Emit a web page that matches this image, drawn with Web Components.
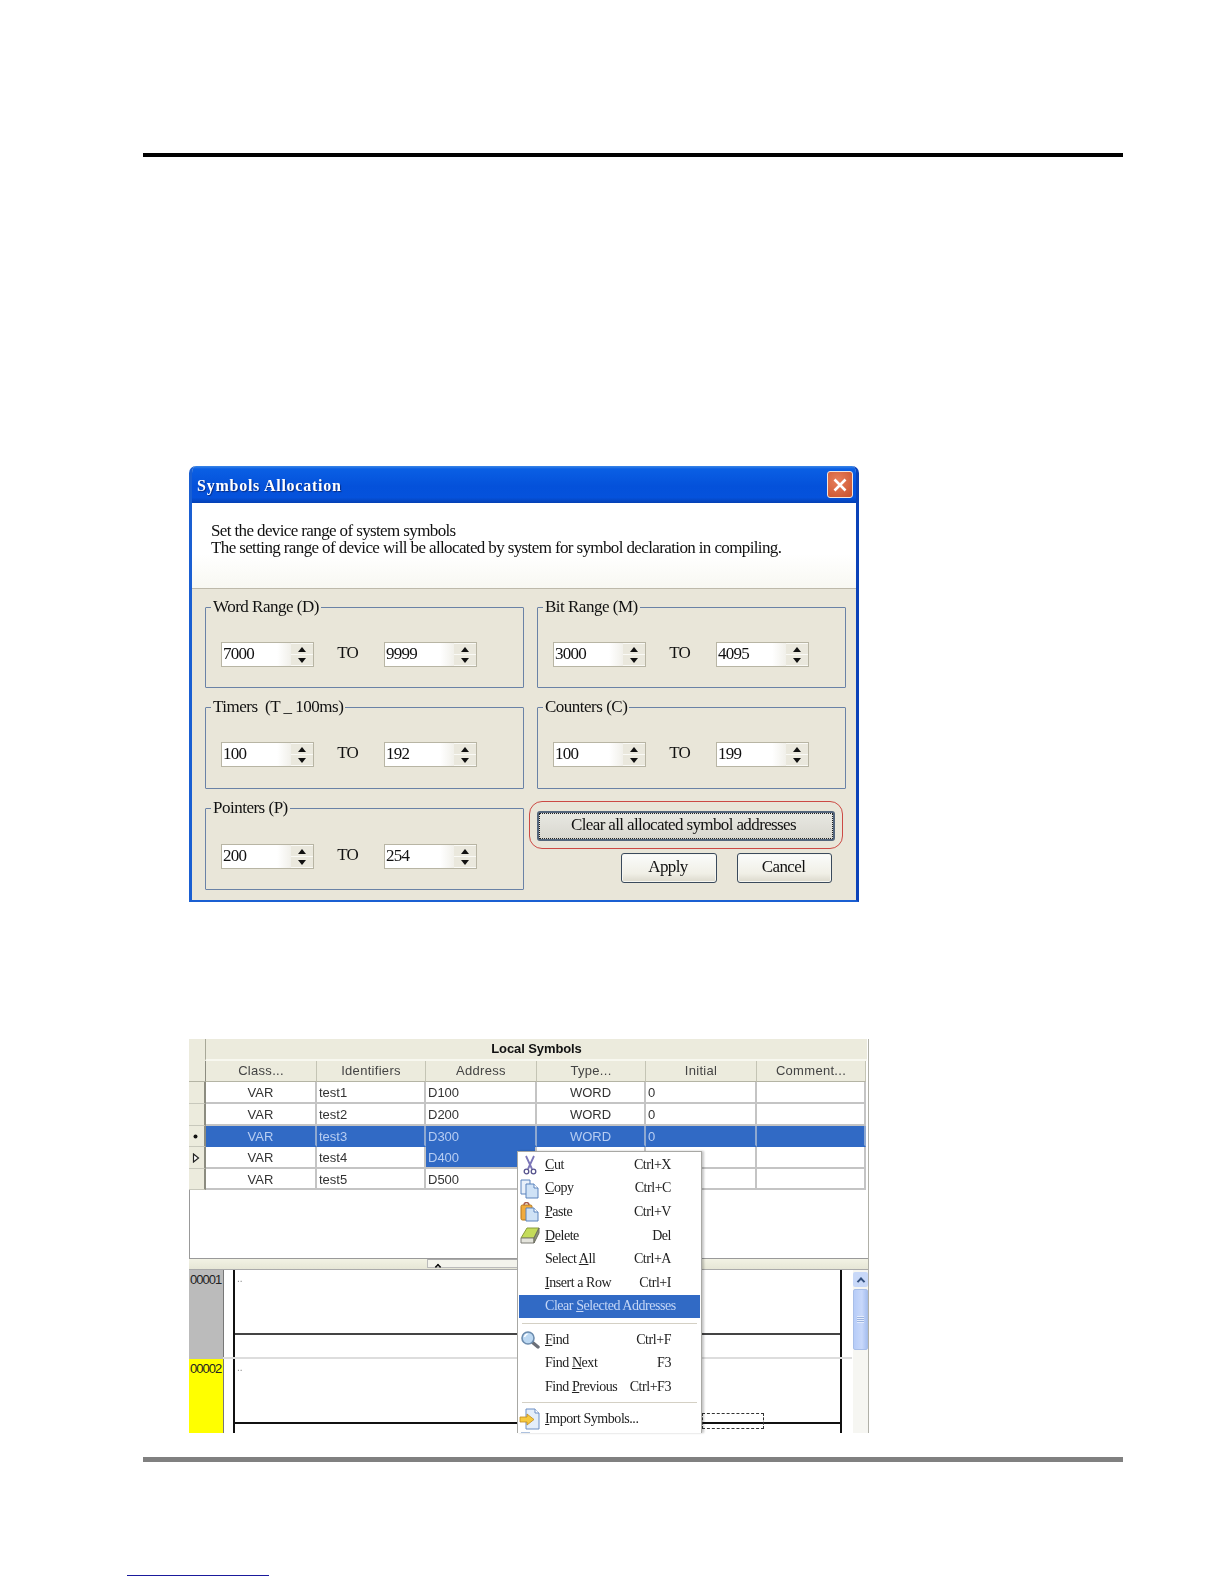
<!DOCTYPE html>
<html>
<head>
<meta charset="utf-8">
<title>Symbols Allocation</title>
<style>
  html, body { margin: 0; background: #fff; }
  body { padding: 153px 0 0 143px; width: 1224px; height: 1584px; box-sizing: border-box; overflow: hidden; font-family: "Liberation Serif", serif; }
</style>
</head>
<body>
<page-rule thick="4" color="#000"></page-rule>

<xp-dialog heading="Symbols Allocation">
  <xp-group label="Word Range (D)" from="7000" to="9999"></xp-group>
  <xp-group label="Bit Range (M)" from="3000" to="4095"></xp-group>
  <xp-group label="Timers&nbsp; (T _ 100ms)" from="100" to="192"></xp-group>
  <xp-group label="Counters (C)" from="100" to="199"></xp-group>
  <xp-group label="Pointers (P)" from="200" to="254" low></xp-group>
  <dialog-actions></dialog-actions>
</xp-dialog>

<symbol-panel></symbol-panel>

<page-rule thick="5" color="#808080" class="bottom"></page-rule>
<foot-link></foot-link>

<script>
const ICONS = {
    cut: `<svg width="20" height="20" viewBox="0 0 20 20" fill="none"><path d="M6 1l6 13M14 1L8 14" stroke="#7b76b8" stroke-width="1.8"/><circle cx="6.5" cy="16.5" r="2.3" stroke="#55528c" stroke-width="1.3"/><circle cx="13.5" cy="16.5" r="2.3" stroke="#55528c" stroke-width="1.3"/></svg>`,
    copy: `<svg width="20" height="20" viewBox="0 0 20 20"><path d="M1 1h9v14H1z" fill="#e8f0fa" stroke="#5b83bd"/><path d="M6 5h8l4 4v10H6z" fill="#cfe2f6" stroke="#5b83bd"/><path d="M14 5v4h4" fill="#fff" stroke="#5b83bd"/></svg>`,
    paste: `<svg width="20" height="20" viewBox="0 0 20 20"><rect x="1" y="3" width="11" height="15" rx="1.5" fill="#f0ab3e" stroke="#b57718"/><path d="M4 3a2.5 2.5 0 0 1 5 0" fill="none" stroke="#a85c4c" stroke-width="1.4"/><path d="M6 6h8l4 4v9H6z" fill="#cfe2f6" stroke="#5b83bd"/><path d="M14 6v4h4" fill="#fff" stroke="#5b83bd"/></svg>`,
    erase: `<svg width="20" height="20" viewBox="0 0 20 20"><path d="M7 2h12l-5 10H1z" fill="#c4dc5a" stroke="#8a9c3c"/><path d="M1 12h13v5H1z" fill="#e4e4dc" stroke="#7c7c74"/><path d="M14 12l5-10v5l-5 10z" fill="#8f9a78" stroke="#6d6d60"/></svg>`,
    find: `<svg width="20" height="20" viewBox="0 0 20 20" fill="none"><path d="M12 12l6 5" stroke="#6b6f78" stroke-width="3.4" stroke-linecap="round"/><circle cx="8" cy="8" r="6" fill="#bcd8f2" stroke="#6c8cae" stroke-width="1.6"/><path d="M4.5 7a4 4 0 0 1 3-3" stroke="#fff" stroke-width="1.5"/></svg>`,
    load: `<svg width="22" height="22" viewBox="0 0 22 22"><path d="M7 1h9l4 4v16H7z" fill="#e4eefa" stroke="#6d8fc4"/><path d="M16 1v4h4" fill="#fff" stroke="#6d8fc4"/><path d="M1 9h7V6l7 5.5L8 17v-3H1z" fill="#f6c93e" stroke="#c08a1c" stroke-width=".8"/></svg>`
};

class PageRule extends HTMLElement {
    connectedCallback() {
        const thick = this.getAttribute('thick');
        const color = this.getAttribute('color');
        const top = this.classList.contains('bottom') ? 24 : 0;
        this.attachShadow({ mode: 'open' }).innerHTML = `
            <style>
                :host { display: block; width: 980px; height: ${thick}px; margin-top: ${top}px; background: ${color}; }
            </style>`;
    }
}

class FootLink extends HTMLElement {
    constructor() {
        super();
        this.attachShadow({ mode: 'open' }).innerHTML = `
            <style>
                :host { display: block; width: 142px; height: 1px; margin: 113px 0 0 -16px; background: #1a1a9c; }
            </style>`;
    }
}

class XpDialog extends HTMLElement {
    constructor() {
        super();
        this.attachShadow({ mode: 'open' }).innerHTML = `
            <style>
                :host {
                    display: block; width: 670px; height: 436px; margin: 309px 0 0 46px;
                    box-sizing: border-box; border-radius: 7px 7px 0 0; overflow: hidden;
                    background: #e9e6d9; font-family: "Liberation Serif", serif; color: #111;
                    border: solid #1a5fd2; border-width: 0 3px 2px 3px; border-right-color: #0b42b8;
                    filter: blur(.45px);
                }
                .title {
                    height: 37px; margin: 0 -3px; padding: 3px 6px 0 8px; box-sizing: border-box; display: flex; align-items: center; justify-content: space-between;
                    background: linear-gradient(#3b86e6 0, #0a5fe4 8%, #0451da 55%, #0552dc 85%, #0440b4 100%);
                    color: #fff; font-weight: bold; font-size: 16px; letter-spacing: .75px; text-shadow: 1px 1px 1px #0a2c80;
                }
                .close {
                    width: 26px; height: 27px; margin-top: -3px; box-sizing: border-box; border: 1px solid #f4e4dc; border-radius: 3px;
                    background: radial-gradient(circle at 40% 35%, #e8805c, #c8502c); display: flex; align-items: center; justify-content: center;
                }
                .intro {
                    height: 86px; padding: 19px 0 0 19px; box-sizing: border-box;
                    background: linear-gradient(#fff 60%, #f8f8f2); border-bottom: 1px solid #bdb9aa;
                    font-size: 17px; line-height: 17px; letter-spacing: -.62px;
                }
                .body {
                    display: grid; grid-template-columns: 319px 309px; grid-template-rows: 81px 82px 82px;
                    gap: 19px 13px; padding: 18px 0 0 13px;
                }
            </style>
            <div class="title">
                <span>${this.getAttribute('heading')}</span>
                <span class="close"><svg width="16" height="16" viewBox="0 0 16 16"><path d="M2.5 2.5l11 11M13.5 2.5l-11 11" stroke="#fff" stroke-width="2.6"/></svg></span>
            </div>
            <div class="intro">Set the device range of system symbols<br>The setting range of device will be allocated by system for symbol declaration in compiling.</div>
            <div class="body"><slot></slot></div>`;
    }
}

class XpGroup extends HTMLElement {
    connectedCallback() {
        const root = this.attachShadow({ mode: 'open' });
        root.innerHTML = `
            <style>
                :host {
                    display: block; position: relative; box-sizing: border-box;
                    border: 1px solid #6a82a6; border-radius: 1px;
                    font-size: 17px; letter-spacing: -.5px; color: #111;
                }
                .label { position: absolute; left: 5px; top: -11px; padding: 0 2px; background: #e9e6d9; line-height: 20px; white-space: nowrap; }
                .row { display: grid; grid-template-columns: 93px 70px 93px; align-items: center; padding: ${this.hasAttribute('low') ? 35 : 34}px 0 0 15px; }
                .to { text-align: center; padding: 0 3px 4px 0; letter-spacing: -1px; }
            </style>
            <div class="label">${this.getAttribute('label')}</div>
            <div class="row">
                <xp-spin value="${this.getAttribute('from')}"></xp-spin>
                <span class="to">TO</span>
                <xp-spin value="${this.getAttribute('to')}"></xp-spin>
            </div>`;
    }
}

class XpSpin extends HTMLElement {
    connectedCallback() {
        this.attachShadow({ mode: 'open' }).innerHTML = `
            <style>
                :host {
                    display: flex; height: 25px; box-sizing: border-box; border: 1px solid #b8b5a4;
                    background: #fff; font-size: 17px; letter-spacing: -.75px; color: #111; line-height: 21px;
                }
                .val { flex: 1; padding-left: 1px; background: linear-gradient(90deg, #fff 80%, #f1f0ea); }
                .btns { width: 22px; display: flex; flex-direction: column; background: #fafaf6; gap: 1px; padding: 1px 0; box-sizing: border-box; }
                .btns span { flex: 1; display: flex; align-items: center; justify-content: center; background: #eae8dd; }
                i { width: 0; height: 0; border: 4px solid transparent; }
                .up { border-bottom: 5px solid #111; border-top: 0; }
                .dn { border-top: 5px solid #111; border-bottom: 0; }
            </style>
            <span class="val">${this.getAttribute('value')}</span>
            <span class="btns"><span><i class="up"></i></span><span><i class="dn"></i></span></span>`;
    }
}

class XpButton extends HTMLElement {
    constructor() {
        super();
        this.attachShadow({ mode: 'open' }).innerHTML = `
            <style>
                :host {
                    display: flex; align-items: center; justify-content: center; box-sizing: border-box; height: 30px;
                    border: 1px solid #3a4a5c; border-radius: 3px;
                    background: linear-gradient(#fbfcfb, #f0efe6 70%, #dcd9cc);
                    box-shadow: inset 0 0 0 1px #f6f6f0;
                    font-size: 17px; letter-spacing: -.62px; color: #111; padding: 0 2px 2px 0;
                }
                :host([focused]) {
                    background: linear-gradient(#e8e8e2, #d8d7cf); border: 2px solid #54667c;
                    box-shadow: none; outline: 1px dotted #222; outline-offset: -3px; padding-right: 5px;
                }
            </style>
            <slot></slot>`;
    }
}

class DialogActions extends HTMLElement {
    constructor() {
        super();
        this.attachShadow({ mode: 'open' }).innerHTML = `
            <style>
                :host { display: block; padding-top: 3px; }
                .clear { position: relative; width: 298px; }
                .ring { position: absolute; left: -8px; right: -8px; top: -10px; bottom: -8px; border: 1.5px solid #cc4a44; border-radius: 13px; }
                .row { display: flex; gap: 20px; justify-content: flex-end; margin-top: 12px; padding-right: 14px; }
                .row xp-button { width: 95px; }
                .row xp-button:first-child { width: 96px; }
            </style>
            <div class="clear">
                <div class="ring"></div>
                <xp-button focused>Clear all allocated symbol addresses</xp-button>
            </div>
            <div class="row">
                <xp-button>Apply</xp-button>
                <xp-button>Cancel</xp-button>
            </div>`;
    }
}

class SymbolPanel extends HTMLElement {
    constructor() {
        super();
        const rows = [
            ['test1', 'D100', 22, '', 'WORD', '0'],
            ['test2', 'D200', 22, '', 'WORD', '0'],
            ['test3', 'D300', 21, 'sel', 'WORD', '0'],
            ['test4', 'D400', 22, 'addr', '', ''],
            ['test5', 'D500', 21, '', '', '']
        ];
        const cols = '17px 111px 109px 111px 109px 111px 109px';
        this.attachShadow({ mode: 'open' }).innerHTML = `
            <style>
                :host {
                    display: block; position: relative; width: 680px; height: 394px; margin: 137px 0 0 46px; box-sizing: border-box;
                    border-right: 1px solid #b0b0a8;
                    font-family: "Liberation Sans", sans-serif; font-size: 13px; color: #333;
                }
                .view { filter: blur(.35px); height: 100%; display: flex; flex-direction: column; }
                .band { height: 22px; flex: none; display: grid; grid-template-columns: 16px 1fr; background: #ecebdd; margin-right: 1px; }
                .band b { display: block; text-align: center; color: #111; line-height: 20px; letter-spacing: -.1px; border-left: 1px solid #a8a898; border-bottom: 2px solid #f8f8f0; box-sizing: border-box; height: 22px; }
                .grid { display: grid; grid-template-columns: ${cols}; flex: none; }
                .row { grid-template-rows: 100%; }
                .head span { height: 21px; line-height: 20px; text-align: center; background: #ecebdd; color: #444; letter-spacing: .3px; border-right: 1px solid #c4c4b4; border-bottom: 1px solid #b4b4a4; box-sizing: border-box; }
                .gutter { background: #ecebdd; border-right: 2px solid #8c8c80; border-bottom: 1px solid #c8c8bc; box-sizing: border-box; display: flex; align-items: center; justify-content: center; padding-right: 2px; }
                .row > span:not(.gutter) { line-height: 20px; padding-top: 1px; background: #fff; border-right: 2px solid #c4c4c4; border-bottom: 2px solid #c4c4c4; box-sizing: border-box; padding-left: 2px; white-space: nowrap; overflow: hidden; }
                .row > .c { text-align: center; padding-left: 0 !important; }
                .row.sel > span:not(.gutter) { background: #316ac5; color: #b7cdf2; border-color: #316ac5 #8ea8d0 #316ac5 #316ac5; }
                .row.addr > .addr { background: #316ac5; color: #b7cdf2; }
                .blank { flex: 1; border-left: 1px solid #999; background: #fff; border-bottom: 1px solid #999; }
                .split { height: 11px; flex: none; background: linear-gradient(#f2f2e4, #e6e6d6); border-bottom: 1px solid #aaa; box-sizing: border-box; padding-left: 238px; }
                .grip { display: flex; align-items: center; width: 100px; height: 9px; background: #f4f4ec; border: 1px solid #bbb; border-top-color: #aaa; box-sizing: border-box; padding-left: 7px; }
                .grip i { width: 6px; height: 6px; border: solid #111; border-width: 2px 0 0 2px; transform: rotate(45deg) translate(2px, 2px) scale(.75); box-sizing: border-box; }
                .ladder { height: 163px; flex: none; display: flex; background: #fff; overflow: hidden; }
                .rungs { width: 663px; flex: none; display: flex; flex-direction: column; }
                .scroll { width: 15px; flex: none; padding-top: 2px; background: #f6f6f2; border-left: 1px solid #fff; }
                .scroll .up { height: 15px; margin-bottom: 2px; background: #c8d8f8; border-radius: 2px; display: flex; align-items: center; justify-content: center; }
                .scroll .up i { width: 6px; height: 6px; border: solid #33507e; border-width: 2px 0 0 2px; transform: rotate(45deg) translate(1px, 1px); box-sizing: border-box; }
                .scroll .thumb { height: 61px; background: linear-gradient(90deg, #b6ccf8, #c8d8fa 60%, #a8c0f0); border: 1px solid #a8bee8; border-radius: 2px; box-sizing: border-box; display: flex; align-items: center; justify-content: center; }
                .scroll .thumb i { width: 7px; height: 7px; background: repeating-linear-gradient(#e4ecfc 0 1px, #9cb4e0 1px 2px); }
            </style>
            <div class="view">
                <div class="band"><span class="gutter" style="border-right:0;border-bottom:0"></span><b>Local Symbols</b></div>
                <div class="grid head">
                    <span style="border-right:1px solid #8c8c80"></span><span>Class...</span><span>Identifiers</span><span>Address</span><span>Type...</span><span>Initial</span><span>Comment...</span>
                </div>
                ${rows.map(([id, addr, h, kind, type, init], i) => `
                    <div class="grid row ${kind}" style="height:${h}px">
                        <span class="gutter">${i === 2 ? `<svg width="5" height="5" viewBox="0 0 5 5"><circle cx="2.5" cy="2.5" r="2" fill="#111"/></svg>` : i === 3 ? `<svg width="8" height="10" viewBox="0 0 8 10"><path d="M1.5 1l5 4-5 4z" fill="#fff" stroke="#222" stroke-width="1.2"/></svg>` : ''}</span>
                        <span class="c">VAR</span><span>${id}</span><span class="addr">${addr}</span><span class="c">${type}</span><span>${init}</span><span></span>
                    </div>`).join('')}
                <div class="blank"></div>
                <div class="split"><div class="grip"><i></i></div></div>
                <div class="ladder">
                    <div class="rungs">
                        <ladder-row num="00001" fill="#bbbbbb" rung="#444" height="89"></ladder-row>
                        <ladder-row num="00002" fill="#ffff00" rung="#111" height="74" coil></ladder-row>
                    </div>
                    <div class="scroll"><div class="up"><i></i></div><div class="thumb"><i></i></div></div>
                </div>
            </div>
            <context-menu>
                <menu-item icon="cut" key="Ctrl+X"><u>C</u>ut</menu-item>
                <menu-item icon="copy" key="Ctrl+C"><u>C</u>opy</menu-item>
                <menu-item icon="paste" key="Ctrl+V"><u>P</u>aste</menu-item>
                <menu-item icon="erase" key="Del"><u>D</u>elete</menu-item>
                <menu-item key="Ctrl+A">Select <u>A</u>ll</menu-item>
                <menu-item key="Ctrl+I"><u>I</u>nsert a Row</menu-item>
                <menu-item active>Clear <u>S</u>elected Addresses</menu-item>
                <menu-sep style="height:9.8px"></menu-sep>
                <menu-item icon="find" key="Ctrl+F"><u>F</u>ind</menu-item>
                <menu-item key="F3">Find <u>N</u>ext</menu-item>
                <menu-item key="Ctrl+F3">Find <u>P</u>revious</menu-item>
                <menu-sep style="height:8px"></menu-sep>
                <menu-item icon="load"><u>I</u>mport Symbols...</menu-item>
                <menu-item icon="copy"></menu-item>
            </context-menu>`;
    }
}

class LadderRow extends HTMLElement {
    connectedCallback() {
        const coil = this.hasAttribute('coil');
        this.attachShadow({ mode: 'open' }).innerHTML = `
            <style>
                :host { display: flex; height: ${this.getAttribute('height')}px; font-family: "Liberation Sans", sans-serif; }
                .num { width: 35px; flex: none; box-sizing: border-box; background: ${this.getAttribute('fill')}; border-right: 1px solid #777; font-size: 13px; letter-spacing: -1px; color: #222; line-height: 20px; padding-left: 1px; }
                .gap { width: 9px; flex: none; }
                .area { width: 609px; flex: none; box-sizing: border-box; position: relative; border: solid #111; border-width: 0 2.5px; }
                .dots { font-size: 10px; color: #888; line-height: 12px; padding: 3px 0 0 2px; height: 63px; box-sizing: border-box; }
                .rung { height: 2px; background: ${this.getAttribute('rung')}; }
                .sep { position: absolute; left: -12px; right: -12px; bottom: 0; height: 2px; background: #ddd; ${coil ? 'display: none;' : ''} }
                .coil { position: absolute; left: 467px; top: 54px; width: 62px; height: 16px; border: 1px dashed #333; box-sizing: border-box; }
                .tail { width: 10px; flex: none; }
            </style>
            <div class="num">${this.getAttribute('num')}</div>
            <div class="gap"></div>
            <div class="area">
                <div class="dots">..</div>
                <div class="rung"></div>
                <div class="sep"></div>
                ${coil ? '<div class="coil"></div>' : ''}
            </div>
            <div class="tail"></div>`;
    }
}

class ContextMenu extends HTMLElement {
    constructor() {
        super();
        this.attachShadow({ mode: 'open' }).innerHTML = `
            <style>
                :host {
                    position: absolute; left: 328px; top: 112px; width: 185px; bottom: 0; box-sizing: border-box;
                    padding: 1px; background: #fff; overflow: hidden; border: solid #a8a8a4; border-width: 1px 1px 0 1px;
                    box-shadow: 2px 0 2px rgba(0,0,0,.22);
                    font-family: "Liberation Serif", serif; font-size: 14px; letter-spacing: -.45px; color: #222;
                    filter: blur(.35px);
                }
            </style>
            <slot></slot>`;
    }
}

class MenuItem extends HTMLElement {
    connectedCallback() {
        const icon = ICONS[this.getAttribute('icon')] || '';
        const key = this.getAttribute('key') || '';
        this.attachShadow({ mode: 'open' }).innerHTML = `
            <style>
                :host { display: flex; align-items: center; height: 23.6px; padding: 0 29px 0 26px; position: relative; white-space: nowrap; }
                :host([active]) { background: #316ac5; color: #c4d6f6; }
                .icon { position: absolute; left: 0; top: 1px; width: 22px; height: 22px; display: flex; align-items: center; justify-content: center; }
                .key { margin-left: auto; }
            </style>
            <span class="icon">${icon}</span>
            <span><slot></slot></span>
            <span class="key">${key}</span>`;
    }
}

class MenuSep extends HTMLElement {
    constructor() {
        super();
        this.attachShadow({ mode: 'open' }).innerHTML = `
            <style>
                :host { display: flex; align-items: center; padding: 0 3px; box-sizing: border-box; }
                div { flex: 1; height: 1px; background: #d4d0c4; }
            </style>
            <div></div>`;
    }
}

customElements.define('page-rule', PageRule);
customElements.define('foot-link', FootLink);
customElements.define('xp-dialog', XpDialog);
customElements.define('xp-group', XpGroup);
customElements.define('xp-spin', XpSpin);
customElements.define('xp-button', XpButton);
customElements.define('dialog-actions', DialogActions);
customElements.define('symbol-panel', SymbolPanel);
customElements.define('ladder-row', LadderRow);
customElements.define('context-menu', ContextMenu);
customElements.define('menu-item', MenuItem);
customElements.define('menu-sep', MenuSep);
</script>
</body>
</html>
